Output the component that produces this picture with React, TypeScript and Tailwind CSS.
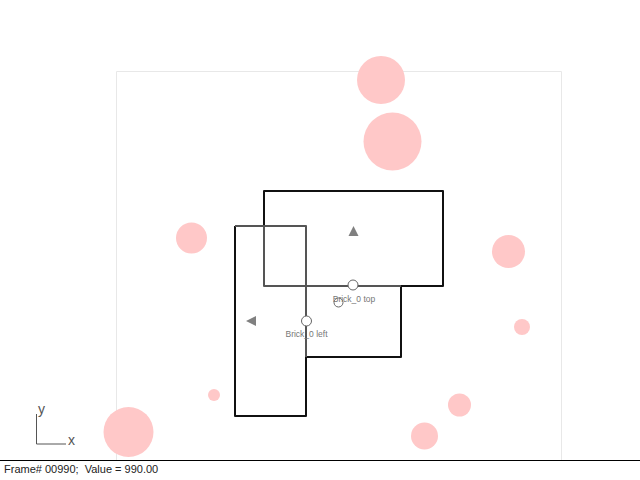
const circles: [number, number, number][] = [
  [381, 80, 24],
  [392.5, 141.5, 29],
  [191.5, 238, 15.5],
  [508.5, 251.5, 16.5],
  [522, 327, 8],
  [214, 395, 6],
  [459.5, 405, 11.5],
  [424.5, 436, 13.5],
  [128.5, 432, 25],
];

export default function App() {
  return (
    <div className="flex h-[480px] w-[640px] flex-col overflow-hidden bg-white font-['Liberation_Sans',sans-serif]">
      <div className="h-[460px] shrink-0">
        <svg width="640" height="460" viewBox="0 0 640 460" className="block overflow-visible">
          <path d="M116.5 460V71.5H561.5V460" fill="none" stroke="#e8e8e8" />
          {circles.map(([cx, cy, r]) => (
            <circle key={cx} cx={cx} cy={cy} r={r} fill="#ffc8c8" />
          ))}
          <path d="M264 226V191H443V286H401V357H306V416H235V226" fill="none" stroke="#111" strokeWidth="2" strokeLinejoin="round" />
          <path d="M235 226H306V357M264 226V286H401" fill="none" stroke="#555" strokeWidth="2" strokeLinejoin="round" />
          <polygon points="348.5,236 358.5,236 353.5,226" fill="#808080" />
          <polygon points="256,316 256,326 246,321" fill="#808080" />
          <circle cx="338.5" cy="302.5" r="4.5" fill="white" stroke="#666" />
          <circle cx="353" cy="285" r="5" fill="white" stroke="#666" />
          <circle cx="306.5" cy="321" r="5" fill="white" stroke="#666" />
          <text x="354" y="302" textAnchor="middle" fontSize="8.5" fill="#777">Brick_0 top</text>
          <text x="306.5" y="337" textAnchor="middle" fontSize="8.5" fill="#777">Brick_0 left</text>
          <path d="M36.5 414V444H66" fill="none" stroke="#555" />
          <text x="38" y="414" fontSize="14" fill="#555">y</text>
          <text x="68" y="445" fontSize="14" fill="#555">x</text>
        </svg>
      </div>
      <div className="relative h-5 shrink-0 border-t border-black pl-1 text-[11px] leading-4 text-[#222]">
        Frame# 00990;&nbsp; Value = 990.00
      </div>
    </div>
  );
}
